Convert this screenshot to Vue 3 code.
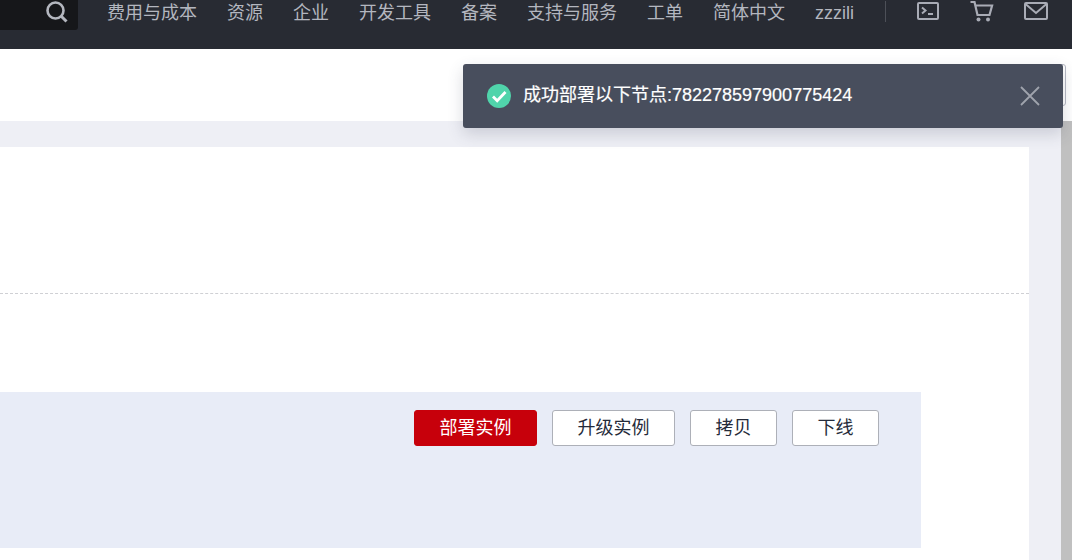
<script setup>
const navItems = ['费用与成本', '资源', '企业', '开发工具', '备案', '支持与服务', '工单', '简体中文', 'zzzili']
const actions = [
  { label: '部署实例', cls: 'primary' },
  { label: '升级实例', cls: 'wide' },
  { label: '拷贝', cls: '' },
  { label: '下线', cls: '' }
]
</script>

<template>
  <div class="page">
    <header class="topbar">
      <div class="search">
        <svg width="24" height="24" viewBox="0 0 24 24" fill="none" stroke="#b4b7bf">
          <circle cx="10.5" cy="10.5" r="8" stroke-width="2.6" />
          <path d="M16 16l5.5 5.5" stroke-width="3" />
        </svg>
      </div>
      <nav class="nav">
        <span v-for="item in navItems" :key="item" class="nav-item">{{ item }}</span>
      </nav>
      <span class="divider"></span>
      <div class="icons">
        <svg class="term" width="22" height="18" viewBox="0 0 22 18" fill="none" stroke="#a9acb6" stroke-width="2">
          <rect x="1" y="1" width="20" height="16" rx="1" />
          <path d="M5 5.5l3.5 3L5 11.5" stroke-width="2" />
          <path d="M11 12h5" stroke-width="2" />
        </svg>
        <svg class="cart" width="24" height="21" viewBox="0 0 24 21" fill="none" stroke="#a9acb6" stroke-width="2.2">
          <path d="M0.5 1h4l3 13h12l2.6-9.5H5.5" />
          <circle cx="8.5" cy="18.5" r="2" fill="#a9acb6" stroke="none" />
          <circle cx="18" cy="18.5" r="2" fill="#a9acb6" stroke="none" />
        </svg>
        <svg class="mail" width="24" height="18" viewBox="0 0 24 18" fill="none" stroke="#a9acb6" stroke-width="2">
          <rect x="1" y="1" width="22" height="16" rx="1" />
          <path d="M1.5 2L12 11 22.5 2" />
        </svg>
      </div>
    </header>

    <section class="toolbar">
      <button class="ghost" type="button"></button>
    </section>

    <div class="body">
      <main class="content">
        <div class="card">
          <div class="card-top"></div>
          <div class="card-mid"></div>
          <div class="panel">
            <button
              v-for="a in actions"
              :key="a.label"
              type="button"
              class="btn"
              :class="a.cls"
            >{{ a.label }}</button>
          </div>
        </div>
      </main>
      <div class="scrollbar"></div>
    </div>

    <div class="toast">
      <svg class="check" width="24" height="24" viewBox="0 0 24 24">
        <circle cx="12" cy="12" r="12" fill="#50d4ab" />
        <path d="M6 12.5l4.2 4.2L18.5 8" fill="none" stroke="#fff" stroke-width="2.8" />
      </svg>
      <span class="toast-text">成功部署以下节点:782278597900775424</span>
      <svg class="close" width="20" height="20" viewBox="0 0 20 20" fill="none" stroke="#a0a3ad" stroke-width="1.8">
        <path d="M1 1l18 18M19 1L1 19" />
      </svg>
    </div>
  </div>
</template>

<style>
html, body { margin: 0; padding: 0; overflow: hidden; background: #fff; }
</style>

<style scoped>
.page {
  position: relative;
  width: 1072px;
  height: 560px;
  overflow: hidden;
  display: flex;
  flex-direction: column;
  font-family: "Liberation Sans", "Noto Sans CJK SC", sans-serif;
  font-size: 18px;
}
.topbar {
  height: 49px;
  flex: none;
  background: #282b33;
  display: flex;
  align-items: flex-start;
}
.search {
  width: 78px;
  height: 30px;
  box-sizing: border-box;
  background: #16171a;
  border-radius: 0 0 3px 0;
  display: flex;
  justify-content: flex-end;
  align-items: flex-start;
  padding-right: 9px;
  margin-right: 29px;
}
.nav {
  display: flex;
  gap: 30px;
  height: 24px;
  padding-top: 1px;
}
.nav-item {
  color: #b3b6bf;
  line-height: 24px;
  white-space: nowrap;
}
.divider {
  width: 1px;
  height: 21px;
  background: #4d5058;
  margin-left: 31px;
  margin-top: 1px;
}
.icons {
  display: flex;
  align-items: flex-start;
  margin-left: 31px;
}
.icons svg { display: block; }
.icons .term { margin-top: 2px; }
.icons .cart { margin-left: 31px; margin-top: 1px; }
.icons .mail { margin-left: 30px; margin-top: 2px; }
.toolbar {
  height: 72px;
  flex: none;
  background: #fff;
  display: flex;
  justify-content: flex-end;
  align-items: flex-start;
  padding: 15px 6px 0 0;
  box-sizing: border-box;
}
.ghost {
  width: 120px;
  height: 42px;
  background: #fff;
  border: 1px solid #b6b9c4;
  border-radius: 3px;
}
.body {
  flex: 1;
  min-height: 0;
  display: flex;
  background: #eeeff5;
}
.content {
  flex: 1;
  padding: 26px 32px 0 0;
  min-width: 0;
}
.scrollbar {
  width: 11px;
  flex: none;
  background: #c0c0c0;
}
.card {
  height: 100%;
  background: #fff;
}
.card-top {
  height: 146px;
  border-bottom: 1px dashed #cfd0d4;
}
.card-mid { height: 98px; }
.panel {
  width: 921px;
  height: 156px;
  box-sizing: border-box;
  background: #e8ecf7;
  padding: 18px 42px 0 0;
  display: flex;
  justify-content: flex-end;
  align-items: flex-start;
  gap: 15px;
}
.btn {
  width: 87px;
  height: 36px;
  padding: 0;
  box-sizing: border-box;
  background: #fff;
  color: #252b3a;
  border: 1px solid #adb0b8;
  border-radius: 3px;
  font-family: inherit;
  font-size: 18px;
  line-height: 34px;
}
.btn.wide { width: 123px; }
.btn.primary {
  width: 123px;
  background: #c7000b;
  border-color: #c7000b;
  color: #fff;
}
.toast {
  position: absolute;
  left: 463px;
  top: 64px;
  width: 600px;
  height: 64px;
  box-sizing: border-box;
  background: #484e5d;
  border-radius: 3px;
  box-shadow: 0 6px 16px rgba(60, 66, 90, 0.2);
  display: flex;
  align-items: center;
  padding: 0 23px 0 24px;
}
.toast-text {
  color: #fff;
  margin-left: 12px;
  margin-top: -2px;
  line-height: 24px;
  flex: 1;
  white-space: nowrap;
  -webkit-text-stroke: 0.2px #fff;
}
.check, .close { flex: none; }
</style>
